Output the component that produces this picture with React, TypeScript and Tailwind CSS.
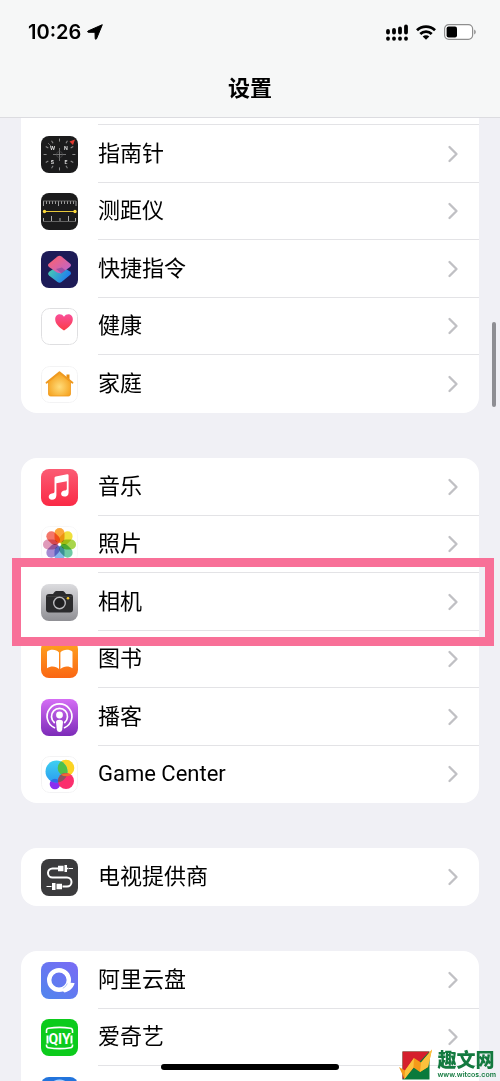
import type { ReactNode } from 'react'
import { ChevronRight } from 'lucide-react'

type Item = {
  name: string
  icon: ReactNode
  highlighted?: boolean
}

const tile = 'size-[37px] shrink-0 rounded-lg'

const spokes = [0, 30, 60, 90, 120, 150, 180, 210, 240, 270, 300, 330]

function CompassIcon() {
  return (
    <svg viewBox="0 0 37 37" className={tile} aria-hidden="true">
      <rect width="37" height="37" fill="#1b1b1c" />
      <g stroke="#8a8a8a" strokeWidth="1">
        {spokes.map((a) => <path key={a} d="M18.5 2.6v3" transform={`rotate(${a} 18.5 18.5)`} />)}
      </g>
      <path d="M18.5 12v13M12 18.5h13" stroke="#8a8a8a" strokeWidth="0.8" />
      <circle cx="18.5" cy="18.5" r="3" fill="none" stroke="#555" strokeWidth="0.6" />
      <path d="M7 7l4 4" stroke="#777" strokeWidth="0.8" />
      <path d="M34 3.5l-5.500 2 3.500 3.500z" fill="#e0392f" />
      <g fill="#ddd" fontFamily="Inter" fontSize="5" fontWeight="700" textAnchor="middle">
        <text x="11.5" y="13.5">W</text>
        <text x="25" y="13.5">N</text>
        <text x="11.5" y="28">S</text>
        <text x="25" y="28">E</text>
      </g>
    </svg>
  )
}

function MeasureIcon() {
  return (
    <svg viewBox="0 0 37 37" className={tile} aria-hidden="true">
      <rect width="37" height="37" fill="#1b1b1c" />
      <path d="M2.5 8v5M5.5 8v3M8.5 8v3M11.5 8v3M14.5 8v3M17.5 8v5M20.5 8v3M23.5 8v3M26.5 8v3M29.5 8v3M32.5 8v3M35 8v5" stroke="#aaa" strokeWidth="0.9" />
      <path d="M2 8h33M2 28.5h33" stroke="#777" strokeWidth="0.8" />
      <path d="M2.5 28v-3M10.5 28v-5M19 28v-3M27.5 28v-5M34.5 28v-3" stroke="#bbb" strokeWidth="0.9" />
      <path d="M3 18.5h31" stroke="#e8c83a" strokeWidth="1.1" />
      <circle cx="3.5" cy="18.5" r="1.7" fill="#fbd93b" />
      <circle cx="34" cy="18.5" r="1.7" fill="#fbd93b" />
    </svg>
  )
}

function ShortcutsIcon() {
  return (
    <svg viewBox="0 0 37 37" className={tile} aria-hidden="true">
      <defs>
        <linearGradient id="sc-top" x1="0" y1="0" x2="1" y2="1">
          <stop offset="0.2" stopColor="#f4627c" />
          <stop offset="1" stopColor="#b565d8" />
        </linearGradient>
        <linearGradient id="sc-bottom" x1="0" y1="0" x2="1" y2="0.5">
          <stop offset="0" stopColor="#4fd6a8" />
          <stop offset="1" stopColor="#1f7df0" />
        </linearGradient>
      </defs>
      <rect width="37" height="37" fill="#1d1b57" />
      <path d="M8.5 20.5L18.5 14l10.500 6.5q2 1.800 0 3.500l-8.500 7q-2 1.500-4 0L8 24.500q-2-2 .5-4z" fill="url(#sc-bottom)" />
      <path d="M16.500 5.500q2-1.500 4 0l8.500 7q2 1.700 0 3.500L20 22.500l-4-1L8 16q-2-1.800 0-3.500z" fill="url(#sc-top)" />
      <path d="M15 18l5.500 4.500 4-3-3.500-3z" fill="#3b2f86" opacity="0.35" />
    </svg>
  )
}

function HealthIcon() {
  return (
    <svg viewBox="0 0 37 37" className={tile} aria-hidden="true">
      <defs>
        <linearGradient id="heart" x1="0" y1="0" x2="0" y2="1">
          <stop offset="0" stopColor="#f94f9a" />
          <stop offset="1" stopColor="#fb3b45" />
        </linearGradient>
      </defs>
      <rect x="0.5" y="0.5" width="36" height="36" rx="8" fill="#fff" stroke="#dfdfe1" />
      <path d="M23 22.500C18 19 14.200 15.800 14.200 11.200c0-5.400 6.300-6.600 8.800-2.400 2.500-4.200 8.800-3 8.800 2.400 0 4.600-3.800 7.800-8.800 11.300z" fill="url(#heart)" />
    </svg>
  )
}

function HomeIcon() {
  return (
    <svg viewBox="0 0 37 37" className={tile} aria-hidden="true">
      <defs>
        <radialGradient id="house" cx="0.5" cy="0.6" r="0.6">
          <stop offset="0" stopColor="#ffdc7a" />
          <stop offset="1" stopColor="#f5a01c" />
        </radialGradient>
      </defs>
      <rect x="0.5" y="0.5" width="36" height="36" rx="8" fill="#fff" stroke="#f3f3f4" />
      <path d="M25.5 8.500h3V15h-3z" fill="#e88f12" />
      <path d="M7.500 16L18.500 7l11 9v12q0 2-2 2h-18q-2 0-2-2z" fill="url(#house)" stroke="#f0981a" strokeWidth="0.8" />
      <path d="M5.500 16.800L18.500 6.200l13 10.600" fill="none" stroke="#ef9a20" strokeWidth="1.8" strokeLinecap="round" strokeLinejoin="round" />
    </svg>
  )
}

function MusicIcon() {
  return (
    <svg viewBox="0 0 37 37" className={tile} aria-hidden="true">
      <defs>
        <linearGradient id="music" x1="0" y1="0" x2="0" y2="1">
          <stop offset="0" stopColor="#fb5c74" />
          <stop offset="1" stopColor="#fa2945" />
        </linearGradient>
      </defs>
      <rect width="37" height="37" fill="url(#music)" />
      <path d="M13.500 9q0-1.300 1.300-1.600l11.300-2.200q1.500-.3 1.500 1.200v17c0 3-2 4.200-4.300 4.200-4.200 0-4.200-5.400-.2-6 2-.3 2.700-.5 2.700-1.900v-7.500l-10.400 2v12c0 3.200-2 4.500-4.400 4.500-4.300 0-4.300-5.600-.2-6.200 2-.3 2.700-.6 2.700-2z" fill="#fff" />
    </svg>
  )
}

const petals = [
  { angle: 0, color: '#fba73c' },
  { angle: 45, color: '#f0e03c' },
  { angle: 90, color: '#a9d64c' },
  { angle: 135, color: '#6fcaa4' },
  { angle: 180, color: '#86b6ea' },
  { angle: 225, color: '#a58bd2' },
  { angle: 270, color: '#e09aba' },
  { angle: 315, color: '#f4766a' },
]

function PhotosIcon() {
  return (
    <svg viewBox="0 0 37 37" className={tile} aria-hidden="true">
      <rect x="0.5" y="0.5" width="36" height="36" rx="8" fill="#fff" stroke="#f7f7f8" />
      <g className="isolate">
        {petals.map((p) => (
          <rect
            key={p.angle}
            x="13.5"
            y="2"
            width="10"
            height="15"
            rx="5"
            fill={p.color}
            transform={`rotate(${p.angle} 18.5 18.5)`}
            className="mix-blend-multiply"
          />
        ))}
      </g>
    </svg>
  )
}

function CameraIcon() {
  return (
    <svg viewBox="0 0 37 37" className={tile} aria-hidden="true">
      <defs>
        <linearGradient id="camera" x1="0" y1="0" x2="0" y2="1">
          <stop offset="0" stopColor="#dcdcdf" />
          <stop offset="1" stopColor="#8f8f94" />
        </linearGradient>
      </defs>
      <rect width="37" height="37" fill="url(#camera)" />
      <path d="M5 13q0-3 3-3h4l1.500-2q.7-1 2-1h6q1.300 0 2 1l1.500 2H29q3 0 3 3v12.500q0 3-3 3H8q-3 0-3-3z" fill="#2b2b2d" />
      <path d="M5.500 12.500h26" stroke="#444" strokeWidth="0.7" />
      <circle cx="18.5" cy="19" r="5.8" fill="#202022" stroke="#b9b9bd" strokeWidth="1.4" />
      <circle cx="27" cy="14.2" r="1.3" fill="#f5c62c" />
    </svg>
  )
}

function BooksIcon() {
  return (
    <svg viewBox="0 0 37 37" className={tile} aria-hidden="true">
      <defs>
        <linearGradient id="books" x1="0" y1="0" x2="0" y2="1">
          <stop offset="0" stopColor="#ffa51f" />
          <stop offset="1" stopColor="#fa6614" />
        </linearGradient>
      </defs>
      <rect width="37" height="37" fill="url(#books)" />
      <path d="M18 11.500C15.500 8 9 8 6 10.700v16.500c3.500-2.500 9-2.500 12 .8zM19.400 11.500C22 8 28.500 8 31.500 10.700v16.500c-3.500-2.500-9-2.500-12.100.8z" fill="#fff" />
    </svg>
  )
}

function PodcastsIcon() {
  return (
    <svg viewBox="0 0 37 37" className={tile} aria-hidden="true">
      <defs>
        <linearGradient id="podcasts" x1="0" y1="0" x2="0" y2="1">
          <stop offset="0" stopColor="#d56ef5" />
          <stop offset="1" stopColor="#7c2bb8" />
        </linearGradient>
      </defs>
      <rect width="37" height="37" fill="url(#podcasts)" />
      <g fill="none" stroke="#fff" strokeWidth="1.7" strokeLinecap="round">
        <path d="M13.500 28.700a12.400 12.400 0 1 1 10 0" />
        <path d="M13.300 23.500a8 8 0 1 1 10.400 0" />
      </g>
      <circle cx="18.5" cy="16" r="3.4" fill="#fff" />
      <path d="M15 23q.2-2.200 3.500-2.200T22 23l-.8 7.700q-.4 2.300-2.700 2.300t-2.700-2.300z" fill="#fff" />
    </svg>
  )
}

function GameCenterIcon() {
  return (
    <svg viewBox="0 0 37 37" className={tile} aria-hidden="true">
      <defs>
        <linearGradient id="gc-blue" x1="0" y1="0" x2="0" y2="1">
          <stop offset="0" stopColor="#3fd0f0" />
          <stop offset="1" stopColor="#2b9df0" />
        </linearGradient>
        <clipPath id="gc-clip">
          <circle cx="15.5" cy="15.5" r="11" />
        </clipPath>
      </defs>
      <rect x="0.5" y="0.5" width="36" height="36" rx="8" fill="#fff" stroke="#f3f3f4" />
      <circle cx="14" cy="28" r="5.3" fill="#8a2ff0" />
      <circle cx="25" cy="12" r="8.3" fill="#fbd323" />
      <circle cx="15.5" cy="15.5" r="11" fill="url(#gc-blue)" />
      <g clipPath="url(#gc-clip)">
        <circle cx="25" cy="12" r="8.3" fill="#4fc04a" />
        <circle cx="14" cy="28" r="5.3" fill="#2f6be8" />
      </g>
      <circle cx="25" cy="25" r="8" fill="#fb2f6d" />
      <g clipPath="url(#gc-clip)">
        <circle cx="25" cy="25" r="8" fill="#8a5560" />
      </g>
      <path d="M20 18.700q5-3.200 10.500.3-3 1.300-5.500 1.300t-5-1.600z" fill="#f46a30" />
    </svg>
  )
}

function TvProviderIcon() {
  return (
    <svg viewBox="0 0 37 37" className={tile} aria-hidden="true">
      <rect width="37" height="37" fill="#3b3b3d" />
      <path d="M17 9.500h-5.500a4.500 4.500 0 0 0 0 9H26a4.500 4.500 0 0 1 0 9h-4.500" fill="none" stroke="#fff" strokeWidth="2" />
      <path d="M17 6.800h5.500v5.400H17zM23.500 6H26v7h-2.500zM26 8.700h1.500v1.600H26zM28 9h4v1h-4z" fill="#fff" />
      <path d="M15.500 24.800H21v5.400h-5.500zM11 24h3.500v7H11zM5.500 27h5v1h-5z" fill="#fff" />
    </svg>
  )
}

function AliyunIcon() {
  return (
    <svg viewBox="0 0 37 37" className={tile} aria-hidden="true">
      <defs>
        <linearGradient id="aliyun" x1="1" y1="0" x2="0.3" y2="1">
          <stop offset="0" stopColor="#7a6af5" />
          <stop offset="1" stopColor="#5583ee" />
        </linearGradient>
      </defs>
      <rect width="37" height="37" fill="url(#aliyun)" />
      <circle cx="18" cy="18" r="9.8" fill="none" stroke="#fff" strokeWidth="4.4" />
      <path d="M29.500 20.800l3.300.2c.7 0 .9.500.6 1.100-1.600 4.400-5 7.500-9.900 8.500l-2.700-2.400c4-1 6.200-3.600 6.800-7.400z" fill="#fff" />
      <path d="M26.300 21.500q-1.300 3.500-4.500 4.800" fill="none" stroke="#7fa3f5" strokeWidth="0.6" />
    </svg>
  )
}

function IqiyiIcon() {
  return (
    <svg viewBox="0 0 37 37" className={tile} aria-hidden="true">
      <rect width="37" height="37" fill="#0ccb1c" />
      <g fill="none" stroke="#fff" strokeWidth="1.6">
        <path d="M5.500 14v-2.500q0-2 2-2.300 11-1.700 22 0 2 .3 2 2.300V14" />
        <path d="M5.500 25.500v1q0 2 2 2.300 11 1.700 22 0 2-.3 2-2.300v-1" />
        <path d="M6.500 16.500v8M30.500 16.500v8" strokeWidth="2" />
      </g>
      <text x="18.5" y="24.500" fill="#fff" fontFamily="Roboto" fontSize="14" fontWeight="700" textAnchor="middle">QIY</text>
    </svg>
  )
}

function BlueAppIcon() {
  return (
    <svg viewBox="0 0 37 37" className={tile} aria-hidden="true">
      <rect width="37" height="37" fill="#2274dc" />
      <circle cx="18.5" cy="14.5" r="11" fill="none" stroke="#a9d0ff" strokeWidth="2" />
    </svg>
  )
}

const groups: Item[][] = [
  [
    { name: '指南针', icon: <CompassIcon /> },
    { name: '测距仪', icon: <MeasureIcon /> },
    { name: '快捷指令', icon: <ShortcutsIcon /> },
    { name: '健康', icon: <HealthIcon /> },
    { name: '家庭', icon: <HomeIcon /> },
  ],
  [
    { name: '音乐', icon: <MusicIcon /> },
    { name: '照片', icon: <PhotosIcon /> },
    { name: '相机', icon: <CameraIcon />, highlighted: true },
    { name: '图书', icon: <BooksIcon /> },
    { name: '播客', icon: <PodcastsIcon /> },
    { name: 'Game Center', icon: <GameCenterIcon /> },
  ],
  [{ name: '电视提供商', icon: <TvProviderIcon /> }],
  [
    { name: '阿里云盘', icon: <AliyunIcon /> },
    { name: '爱奇艺', icon: <IqiyiIcon /> },
    { name: '', icon: <BlueAppIcon /> },
  ],
]

function StatusBar() {
  return (
    <div className="flex items-center justify-between pt-5 pr-6 pl-7">
      <div className="flex items-center gap-1.5">
        <span className="text-xl leading-6 font-semibold">10:26</span>
        <svg viewBox="0 0 16 16" className="size-4" aria-hidden="true">
          <path d="M15.300.7L1 7q-.9 1 .2 1.300H8l.2 6.500q.6 1.100 1.300 0z" stroke="#000" strokeLinejoin="round" />
        </svg>
      </div>
      <div className="flex items-center gap-2">
        <svg viewBox="0 0 22 17" className="h-[17px] w-[22px]" aria-hidden="true">
          <path d="M2 7v1.500M8 6v2.500M14 4.500v4M20 2.500v6" stroke="#000" strokeWidth="3.8" strokeLinecap="round" />
          <path d="M2 14.500v.3M8 14.500v.3M14 14.500v.3M20 14.500v.3" stroke="#000" strokeWidth="3.8" strokeLinecap="round" />
        </svg>
        <svg viewBox="0 0 20 15" className="h-[15px] w-5" aria-hidden="true">
          <g fill="none" stroke="#000" strokeWidth="2.8">
            <path d="M1 5.300a13 13 0 0 1 18 0" />
            <path d="M4.300 8.900a8.200 8.200 0 0 1 11.400 0" />
          </g>
          <path d="M10 14.800l-3.300-3.300a4.700 4.700 0 0 1 6.600 0z" />
        </svg>
        <svg viewBox="0 0 32 16" className="h-4 w-8" aria-hidden="true">
          <rect x="0.6" y="0.6" width="28" height="14.8" rx="4.2" fill="#fff" stroke="#8e8e8e" strokeWidth="1.2" />
          <rect x="2.6" y="2.6" width="10.4" height="10.8" rx="2" />
          <path d="M30.200 5.500q1.600.8 1.600 2.500t-1.600 2.500z" fill="#8e8e8e" />
        </svg>
      </div>
    </div>
  )
}

function Row({ item }: { item: Item }) {
  return (
    <li className="group relative odd:h-[58px] even:h-[57px]">
      <a href="#" className="flex h-full items-center pl-5">
        {item.icon}
        <span className="ml-5 flex h-full flex-1 items-center justify-between border-b border-[#e3e3e6] pr-3 group-last:border-transparent">
          <span className="text-[22px] leading-8">{item.name}</span>
          <ChevronRight className="size-7 text-[#c0c0c4]" strokeWidth={2} aria-hidden="true" />
        </span>
      </a>
      {item.highlighted && (
        <div className="pointer-events-none absolute -top-[15px] -right-[15px] -bottom-[15px] -left-[9px] z-10 border-[9px] border-[#f87098]" />
      )}
    </li>
  )
}

function Watermark() {
  return (
    <div className="absolute right-1 bottom-0 flex items-center gap-1">
      <svg viewBox="0 0 34 32" className="h-8 w-[34px]" aria-hidden="true">
        <path d="M3.500 2.500h27v28h-27z" fill="#0a7a3c" />
        <path d="M3.500 2.500h27l-27 28z" fill="#d5202c" />
        <path d="M0 18l6 3.500 9-12.500 7 4.500L33 .5l-4 17.500-8 5-6.500-4.500L5.500 30z" fill="#f59a1a" />
        <path d="M6 21.500L15 9l-.5 9.500-9 11.500zM22 13.500L33 .5l-4 17.500-8 5z" fill="#fbc23c" />
      </svg>
      <div className="text-[#137a3f]">
        <div className="text-[19px] leading-5 font-black">趣文网</div>
        <div className="text-[7px] leading-2 font-semibold">www.witcos.com</div>
      </div>
    </div>
  )
}

export default function App() {
  return (
    <div className="relative flex h-screen flex-col overflow-hidden bg-[#f0f0f5] font-['Inter','Noto_Sans_CJK_SC',sans-serif] text-black">
      <header className="h-[118px] shrink-0 border-b border-[#dcdce0] bg-[#f6f7f7]">
        <StatusBar />
        <h1 className="pt-7 text-center text-[22px] leading-8 font-bold">设置</h1>
      </header>
      <main className="min-h-0 flex-1 overflow-hidden px-[21px] font-['Roboto','Noto_Sans_CJK_SC',sans-serif]">
        <div className="flex flex-col gap-[45px]">
          {groups.map((items, i) => (
            <section key={i} className={i === 0 ? 'rounded-b-2xl bg-white' : 'rounded-2xl bg-white'}>
              {i === 0 && <div className="ml-[77px] h-[7px] border-b border-[#e3e3e6]" />}
              <ul>
                {items.map((item, j) => <Row key={j} item={item} />)}
              </ul>
            </section>
          ))}
        </div>
      </main>
      <div className="absolute top-[322px] right-1 h-[85px] w-1 rounded-full bg-[#8e8e93]" />
      <div className="absolute bottom-[11px] left-1/2 h-[6px] w-[178px] -translate-x-1/2 rounded-full bg-black" />
      <Watermark />
    </div>
  )
}
